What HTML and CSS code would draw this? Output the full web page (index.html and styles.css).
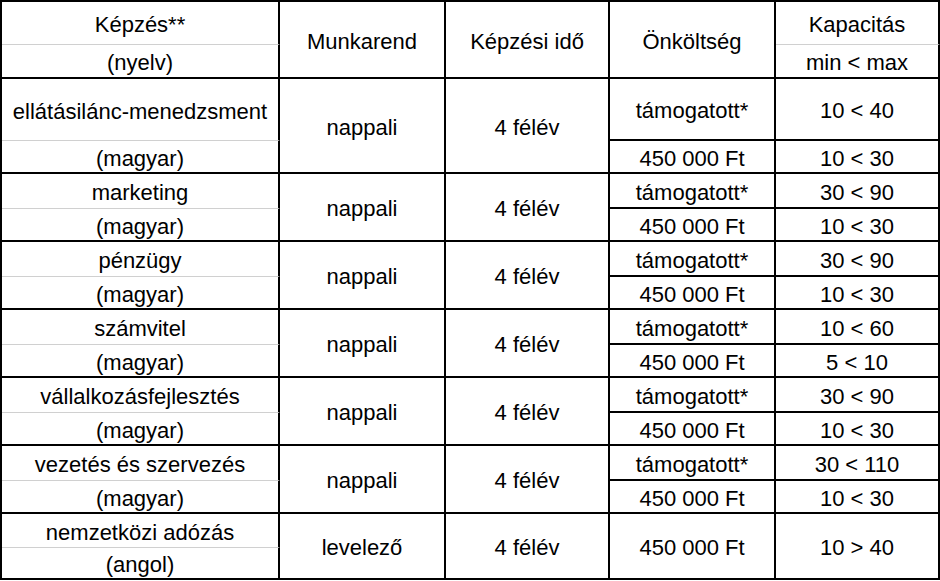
FILE: index.html
```html
<!DOCTYPE html>
<html lang="hu">
<head>
<meta charset="utf-8">
<title>Képzések</title>
<link rel="stylesheet" href="styles.css">
</head>
<body>
<table class="grid">
  <colgroup>
    <col class="w1"><col class="w2"><col class="w3"><col class="w4"><col class="w5">
  </colgroup>
  <thead>
    <tr class="h1">
      <td class="soft">Képzés**</td>
      <td rowspan="2">Munkarend</td>
      <td rowspan="2">Képzési idő</td>
      <td rowspan="2">Önköltség</td>
      <td class="soft">Kapacitás</td>
    </tr>
    <tr class="h2">
      <td>(nyelv)</td>
      <td>min &lt; max</td>
    </tr>
  </thead>
  <tbody>
    <tr class="r1a">
      <td class="soft">ellátásilánc-menedzsment</td>
      <td rowspan="2">nappali</td>
      <td rowspan="2">4 félév</td>
      <td class="sub">támogatott*</td>
      <td class="sub">10 &lt; 40</td>
    </tr>
    <tr class="r1b">
      <td>(magyar)</td>
      <td>450 000 Ft</td>
      <td>10 &lt; 30</td>
    </tr>

    <tr class="ga">
      <td class="soft">marketing</td>
      <td rowspan="2">nappali</td>
      <td rowspan="2">4 félév</td>
      <td class="sub">támogatott*</td>
      <td class="sub">30 &lt; 90</td>
    </tr>
    <tr class="gb">
      <td>(magyar)</td>
      <td>450 000 Ft</td>
      <td>10 &lt; 30</td>
    </tr>

    <tr class="ga">
      <td class="soft">pénzügy</td>
      <td rowspan="2">nappali</td>
      <td rowspan="2">4 félév</td>
      <td class="sub">támogatott*</td>
      <td class="sub">30 &lt; 90</td>
    </tr>
    <tr class="gb">
      <td>(magyar)</td>
      <td>450 000 Ft</td>
      <td>10 &lt; 30</td>
    </tr>

    <tr class="ga">
      <td class="soft">számvitel</td>
      <td rowspan="2">nappali</td>
      <td rowspan="2">4 félév</td>
      <td class="sub">támogatott*</td>
      <td class="sub">10 &lt; 60</td>
    </tr>
    <tr class="gb">
      <td>(magyar)</td>
      <td>450 000 Ft</td>
      <td>5 &lt; 10</td>
    </tr>

    <tr class="ga">
      <td class="soft">vállalkozásfejlesztés</td>
      <td rowspan="2">nappali</td>
      <td rowspan="2">4 félév</td>
      <td class="sub">támogatott*</td>
      <td class="sub">30 &lt; 90</td>
    </tr>
    <tr class="gb">
      <td>(magyar)</td>
      <td>450 000 Ft</td>
      <td>10 &lt; 30</td>
    </tr>

    <tr class="ga">
      <td class="soft">vezetés és szervezés</td>
      <td rowspan="2">nappali</td>
      <td rowspan="2">4 félév</td>
      <td class="sub">támogatott*</td>
      <td class="sub">30 &lt; 110</td>
    </tr>
    <tr class="gb">
      <td>(magyar)</td>
      <td>450 000 Ft</td>
      <td>10 &lt; 30</td>
    </tr>

    <tr class="la">
      <td class="soft">nemzetközi adózás</td>
      <td rowspan="2">levelező</td>
      <td rowspan="2">4 félév</td>
      <td rowspan="2">450 000 Ft</td>
      <td rowspan="2">10 &gt; 40</td>
    </tr>
    <tr class="lb">
      <td>(angol)</td>
    </tr>
  </tbody>
</table>
</body>
</html>
```

FILE: styles.css
```css
html, body {
  margin: 0;
  padding: 0;
  background: #ffffff;
}

.grid {
  table-layout: fixed;
  border-collapse: separate;
  border-spacing: 0;
  width: 940px;
  border-top: 2px solid #000;
  border-left: 2px solid #000;
  font-family: "Liberation Sans", Arial, sans-serif;
  font-size: 22px;
  color: #000;
}

.w1 { width: 278px; }
.w2 { width: 166px; }
.w3 { width: 164px; }
.w4 { width: 166px; }
.w5 { width: 164px; }

.grid td {
  box-sizing: border-box;
  padding: 3px 0 0 0;
  text-align: center;
  vertical-align: middle;
  white-space: nowrap;
  border-right: 2px solid #000;
  border-bottom: 2px solid #000;
  line-height: 25px;
}

.grid td.soft {
  border-bottom: 1px solid #d0d0d0;
}

.grid td.sub {
  border-bottom: 2px solid #000;
}

.h1 { height: 43px; }
.h2 { height: 34px; }
.r1a { height: 62px; }
.r1b { height: 33px; }
.ga { height: 35px; }
.gb { height: 33px; }
.la { height: 34px; }
.lb { height: 32px; }
```
